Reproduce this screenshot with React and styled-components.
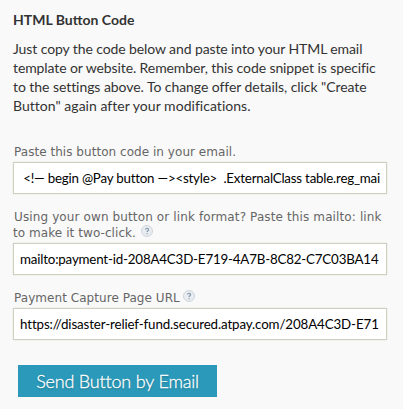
import React from 'react';
import styled, { createGlobalStyle } from 'styled-components';

const Global = createGlobalStyle`
  * { box-sizing: border-box; }
  body { margin: 0; background: #f9f9f9; }
`;

const Panel = styled.main`
  width: 403px;
  height: 409px;
  overflow: hidden;
  padding: 10px 13px 0;
  background: #f9f9f9;
  font-family: Lato, sans-serif;
  color: #333;
`;

const Heading = styled.h1`
  margin: 0 0 9px;
  font-size: 14px;
  line-height: 20px;
  font-weight: 700;
`;

const Intro = styled.p`
  margin: 0;
  font-size: 14px;
  line-height: 19px;
`;

const Line = styled.span`
  display: block;
  width: max-content;
  margin-left: ${(p) => p.$outdent || '0'};
  white-space: pre;
  letter-spacing: ${(p) => p.$spacing || '0'};
`;

const Form = styled.form`
  display: flex;
  flex-direction: column;
  padding-top: 28px;
`;

const Field = styled.div`
  height: ${(p) => p.$height};
`;

const Label = styled.label`
  display: block;
  height: ${(p) => p.$height};
  padding: 1px 0 0 1px;
  font-family: "DejaVu Sans", sans-serif;
  font-size: 12px;
  line-height: 16px;
  color: #666;
`;

const Input = styled.input`
  display: block;
  width: 374px;
  height: 32px;
  padding: 0 6px 1px;
  border: 1px solid #d0d0c2;
  border-radius: 0;
  box-shadow: 0 0 1px #c8c8ba;
  background: #fff;
  font: 13.33px Lato, sans-serif;
  letter-spacing: ${(p) => p.$spacing || '0'};
  color: #000;
  outline: none;
`;

const HelpIcon = styled.svg`
  display: inline-block;
  width: 12px;
  height: 12px;
  margin-left: ${(p) => p.$gap};
  vertical-align: 0;
`;

const Send = styled.button`
  width: 199px;
  height: 32px;
  margin-left: 5px;
  padding: 0;
  border: 0;
  background: #2b99b9;
  color: #fff;
  font: 300 18px Lato, sans-serif;
  letter-spacing: -0.18px;
  -webkit-text-stroke: 0.3px #fff;
  text-shadow: 0 1px 2px rgba(0, 0, 0, 0.3);
  white-space: nowrap;
`;

function Help({ gap }) {
  return (
    <HelpIcon $gap={gap} viewBox="0 0 12 12" aria-label="Help">
      <circle cx="6" cy="6" r="5.5" fill="#e9edf1" stroke="#cbd2d9" strokeWidth="0.9" />
      <path d="M4.5 4.6C4.5 2.8 7.6 2.8 7.6 4.6C7.6 5.8 6.1 5.7 6.1 7.1M6.1 8.2V9.2" fill="none" stroke="#8195aa" strokeWidth="1.2" />
    </HelpIcon>
  );
}

export default function App() {
  return (
    <Panel>
      <Global />
      <Heading>HTML Button Code</Heading>
      <Intro>
        <Line $spacing="-0.1px">Just copy the code below and paste into your HTML email</Line>
        <Line $spacing="-0.1px">template or website. Remember, this code snippet is specific</Line>
        <Line $spacing="-0.06px">to the settings above. To change offer details, click "Create</Line>
        <Line $spacing="0.03px">Button" again after your modifications.</Line>
      </Intro>
      <Form>
        <Field $height="65px">
          <Label $height="19px" htmlFor="code"><Line $spacing="0.04px">Paste this button code in your email.</Line></Label>
          <Input $spacing="-0.21px" id="code" readOnly value=" <!— begin @Pay button —><style>  .ExternalClass table.reg_main_table" />
        </Field>
        <Field $height="81px">
          <Label $height="35px" htmlFor="mailto">
            <Line $spacing="0.12px">Using your own button or link format? Paste this mailto: link</Line>
            <Line $spacing="0.07px" $outdent="-1px">to make it two-click.<Help gap="5px" /></Line>
          </Label>
          <Input $spacing="-0.18px" id="mailto" readOnly value="mailto:payment-id-208A4C3D-E719-4A7B-8C82-C7C03BA14" />
        </Field>
        <Field $height="76px">
          <Label $height="19px" htmlFor="url"><Line $spacing="0.05px">Payment Capture Page URL<Help gap="3px" /></Line></Label>
          <Input $spacing="-0.12px" id="url" readOnly value="https://disaster-relief-fund.secured.atpay.com/208A4C3D-E71" />
        </Field>
        <Send type="button">Send Button by Email</Send>
      </Form>
    </Panel>
  );
}
